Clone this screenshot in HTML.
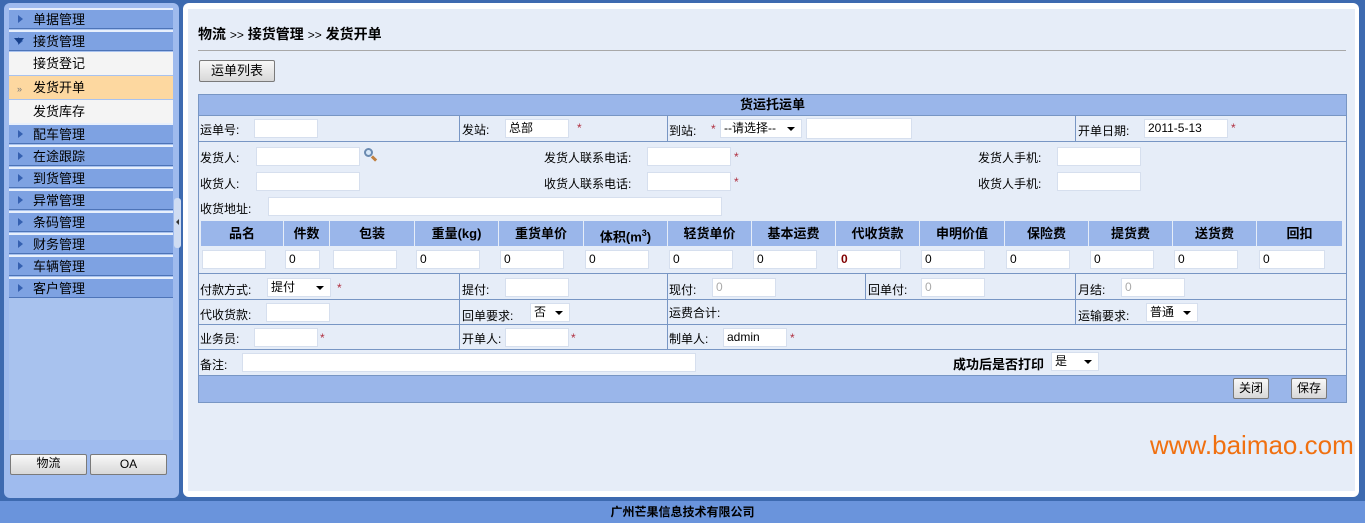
<!DOCTYPE html>
<html><head><meta charset="utf-8"><style>
*{margin:0;padding:0;box-sizing:border-box}
body{width:1365px;height:523px;position:relative;overflow:hidden;background:#3d6ab0;font-family:"Liberation Sans","Noto Sans CJK SC",sans-serif;font-size:12px;color:#000}
.a{position:absolute}
.t{position:absolute;font-size:12px;line-height:14px;white-space:nowrap}
.i{position:absolute;background:#fff;border:1px solid #d6dfee;height:19px;font-size:12px;line-height:17px;padding-left:3px}
.s{position:absolute;color:#b03040;font-size:12px}
.m{position:absolute;left:9px;width:164px;height:21px;background:#7ea2e2;border-top:2px solid #e8f0fc;border-bottom:1px solid #4d74b8;font-size:13px;line-height:19px;padding-left:24px}
.m:before{content:"";position:absolute;left:9px;top:5px;border-left:5px solid #3560b0;border-top:4px solid transparent;border-bottom:4px solid transparent}
.sub{position:absolute;left:9px;width:164px;height:23px;background:#f4f4f4;font-size:13px;line-height:23px;padding-left:24px}
.hl{position:absolute;top:221px;height:25px;background:#9ab6ea;font-weight:bold;font-size:13px;line-height:25px;text-align:center;border-right:1px solid #e6edf8}
.h{position:absolute;left:199px;width:1147px;border-top:1px solid #7896c4}
.btn{position:absolute;background:linear-gradient(#f8f8f8,#d8d8d8);border:1px solid #7a7a7a;border-radius:2px;font-size:12px;text-align:center}
.dd:after{content:"";position:absolute;right:6px;top:7px;border-top:4px solid #000;border-left:4px solid transparent;border-right:4px solid transparent}
</style></head><body>
<div class="a" style="left:4px;top:3px;width:175px;height:495px;background:#9fbbee;border-radius:6px"></div>
<div class="a" style="left:9px;top:8px;width:164px;height:432px;background:#a8c2ee"></div>
<div class="m" style="top:8px">单据管理</div>
<div class="m" style="top:30px">接货管理</div>
<div class="a" style="left:14px;top:38px;border-top:6px solid #17408a;border-left:5px solid transparent;border-right:5px solid transparent"></div>
<div class="sub" style="top:52px">接货登记</div>
<div class="sub" style="top:76px;background:#fdd8a0">发货开单</div>
<div class="t" style="left:17px;top:82px;font-size:9px;color:#777">&#187;</div>
<div class="sub" style="top:100px">发货库存</div>
<div class="m" style="top:123px">配车管理</div>
<div class="m" style="top:145px">在途跟踪</div>
<div class="m" style="top:167px">到货管理</div>
<div class="m" style="top:189px">异常管理</div>
<div class="m" style="top:211px">条码管理</div>
<div class="m" style="top:233px">财务管理</div>
<div class="m" style="top:255px">车辆管理</div>
<div class="m" style="top:277px">客户管理</div>
<div class="btn" style="left:10px;top:454px;width:77px;height:21px;line-height:17px">物流</div>
<div class="btn" style="left:90px;top:454px;width:77px;height:21px;line-height:19px">OA</div>
<div class="a" style="left:174px;top:198px;width:7px;height:50px;background:#cfdcf2;border-radius:3px"></div>
<div class="a" style="left:176px;top:219px;border-right:3px solid #333;border-top:3px solid transparent;border-bottom:3px solid transparent"></div>
<div class="a" style="left:183px;top:3px;width:1176px;height:494px;background:#fff;border-radius:6px"></div>
<div class="a" style="left:188px;top:9px;width:1167px;height:482px;background:#e6edf8"></div>
<div class="t" style="left:198px;top:26px;font-size:14px;line-height:16px;font-weight:bold">物流 <span style="font-weight:normal;font-size:12px">&gt;&gt;</span> 接货管理 <span style="font-weight:normal;font-size:12px">&gt;&gt;</span> 发货开单</div>
<div class="a" style="left:198px;top:50px;width:1148px;border-top:1px solid #a8a8a8"></div>
<div class="btn" style="left:199px;top:60px;width:76px;height:22px;line-height:19px;font-size:13px">运单列表</div>
<div class="a" style="left:198px;top:94px;width:1149px;height:309px;border:1px solid #7896c4;background:#e6edf8"></div>
<div class="a" style="left:199px;top:95px;width:1147px;height:20px;background:#9ab6ea;text-align:center;font-weight:bold;font-size:13px;line-height:20px">货运托运单</div>
<div class="h" style="top:115px"></div>
<div class="h" style="top:141px"></div>
<div class="h" style="top:273px"></div>
<div class="h" style="top:299px"></div>
<div class="h" style="top:324px"></div>
<div class="h" style="top:349px"></div>
<div class="h" style="top:375px"></div>
<div class="a" style="left:199px;top:376px;width:1147px;height:26px;background:#9ab6ea"></div>
<div class="a" style="left:459px;top:115px;height:26px;border-left:1px solid #7896c4"></div>
<div class="a" style="left:667px;top:115px;height:26px;border-left:1px solid #7896c4"></div>
<div class="a" style="left:1075px;top:115px;height:26px;border-left:1px solid #7896c4"></div>
<div class="a" style="left:459px;top:273px;height:76px;border-left:1px solid #7896c4"></div>
<div class="a" style="left:667px;top:273px;height:76px;border-left:1px solid #7896c4"></div>
<div class="a" style="left:865px;top:273px;height:26px;border-left:1px solid #7896c4"></div>
<div class="a" style="left:1075px;top:273px;height:51px;border-left:1px solid #7896c4"></div>
<div class="t" style="left:200px;top:123px">运单号:</div><div class="i" style="left:254px;top:119px;width:64px"></div>
<div class="t" style="left:462px;top:123px">发站:</div><div class="i" style="left:505px;top:119px;width:64px">总部</div><div class="s" style="left:577px;top:121px">*</div>
<div class="t" style="left:669px;top:124px">到站:</div><div class="s" style="left:711px;top:122px">*</div>
<div class="i dd" style="left:720px;top:119px;width:82px">--请选择--</div><div class="i" style="left:806px;top:118px;width:106px;height:21px"></div>
<div class="t" style="left:1078px;top:124px">开单日期:</div><div class="i" style="left:1144px;top:119px;width:84px">2011-5-13</div><div class="s" style="left:1231px;top:121px">*</div>
<div class="t" style="left:200px;top:151px">发货人:</div><div class="i" style="left:256px;top:147px;width:104px"></div>
<div class="a" style="left:364px;top:148px;width:9px;height:9px;border:2px solid #6a8ab0;border-radius:50%;background:#d8e8f8"></div><div class="a" style="left:371px;top:157px;width:6px;height:3px;background:#c08040;transform:rotate(45deg)"></div>
<div class="t" style="left:544px;top:151px">发货人联系电话:</div><div class="i" style="left:647px;top:147px;width:84px"></div><div class="s" style="left:734px;top:150px">*</div>
<div class="t" style="left:978px;top:151px">发货人手机:</div><div class="i" style="left:1057px;top:147px;width:84px"></div>
<div class="t" style="left:200px;top:177px">收货人:</div><div class="i" style="left:256px;top:172px;width:104px"></div>
<div class="t" style="left:544px;top:177px">收货人联系电话:</div><div class="i" style="left:647px;top:172px;width:84px"></div><div class="s" style="left:734px;top:175px">*</div>
<div class="t" style="left:978px;top:177px">收货人手机:</div><div class="i" style="left:1057px;top:172px;width:84px"></div>
<div class="t" style="left:200px;top:202px">收货地址:</div><div class="i" style="left:268px;top:197px;width:454px"></div>
<div class="hl" style="left:201px;width:83px">品名</div>
<div class="hl" style="left:284px;width:46px">件数</div>
<div class="hl" style="left:330px;width:85px">包装</div>
<div class="hl" style="left:415px;width:84px">重量(kg)</div>
<div class="hl" style="left:499px;width:85px">重货单价</div>
<div class="hl" style="left:584px;width:84px">体积(m<sup style="font-size:9px">3</sup>)</div>
<div class="hl" style="left:668px;width:84px">轻货单价</div>
<div class="hl" style="left:752px;width:84px">基本运费</div>
<div class="hl" style="left:836px;width:84px">代收货款</div>
<div class="hl" style="left:920px;width:85px">申明价值</div>
<div class="hl" style="left:1005px;width:84px">保险费</div>
<div class="hl" style="left:1089px;width:84px">提货费</div>
<div class="hl" style="left:1173px;width:84px">送货费</div>
<div class="hl" style="left:1257px;width:86px">回扣</div>
<div class="i" style="left:202px;top:250px;width:64px"></div>
<div class="i" style="left:285px;top:250px;width:35px">0</div>
<div class="i" style="left:333px;top:250px;width:64px"></div>
<div class="i" style="left:416px;top:250px;width:64px">0</div>
<div class="i" style="left:500px;top:250px;width:64px">0</div>
<div class="i" style="left:585px;top:250px;width:64px">0</div>
<div class="i" style="left:669px;top:250px;width:64px">0</div>
<div class="i" style="left:753px;top:250px;width:64px">0</div>
<div class="i" style="left:837px;top:250px;width:64px;color:#800000;font-weight:bold">0</div>
<div class="i" style="left:921px;top:250px;width:64px">0</div>
<div class="i" style="left:1006px;top:250px;width:64px">0</div>
<div class="i" style="left:1090px;top:250px;width:64px">0</div>
<div class="i" style="left:1174px;top:250px;width:64px">0</div>
<div class="i" style="left:1259px;top:250px;width:66px">0</div>
<div class="t" style="left:200px;top:283px">付款方式:</div><div class="i dd" style="left:267px;top:278px;width:64px">提付</div><div class="s" style="left:337px;top:281px">*</div>
<div class="t" style="left:462px;top:283px">提付:</div><div class="i" style="left:505px;top:278px;width:64px"></div>
<div class="t" style="left:669px;top:283px">现付:</div><div class="i" style="left:712px;top:278px;width:64px;color:#aaa">0</div>
<div class="t" style="left:868px;top:283px">回单付:</div><div class="i" style="left:921px;top:278px;width:64px;color:#aaa">0</div>
<div class="t" style="left:1078px;top:283px">月结:</div><div class="i" style="left:1121px;top:278px;width:64px;color:#aaa">0</div>
<div class="t" style="left:200px;top:308px">代收货款:</div><div class="i" style="left:266px;top:303px;width:64px"></div>
<div class="t" style="left:462px;top:309px">回单要求:</div><div class="i dd" style="left:530px;top:303px;width:40px">否</div>
<div class="t" style="left:669px;top:306px">运费合计:</div>
<div class="t" style="left:1078px;top:309px">运输要求:</div><div class="i dd" style="left:1146px;top:303px;width:52px">普通</div>
<div class="t" style="left:200px;top:332px">业务员:</div><div class="i" style="left:254px;top:328px;width:64px"></div><div class="s" style="left:320px;top:331px">*</div>
<div class="t" style="left:462px;top:332px">开单人:</div><div class="i" style="left:505px;top:328px;width:64px"></div><div class="s" style="left:571px;top:331px">*</div>
<div class="t" style="left:669px;top:332px">制单人:</div><div class="i" style="left:723px;top:328px;width:64px">admin</div><div class="s" style="left:790px;top:331px">*</div>
<div class="t" style="left:200px;top:358px">备注:</div><div class="i" style="left:242px;top:353px;width:454px"></div>
<div class="t" style="left:953px;top:358px;font-weight:bold;font-size:13px">成功后是否打印</div><div class="i dd" style="left:1051px;top:352px;width:48px">是</div>
<div class="btn" style="left:1233px;top:378px;width:36px;height:21px;line-height:19px">关闭</div>
<div class="btn" style="left:1291px;top:378px;width:36px;height:21px;line-height:19px">保存</div>
<div class="t" style="left:1150px;top:430px;font-size:26px;line-height:30px;color:#f07010">www.baimao.com</div>
<div class="a" style="left:0;top:501px;width:1365px;height:22px;background:#6a94dc;text-align:center;font-weight:bold;font-size:12px;line-height:22px">广州芒果信息技术有限公司</div>
</body></html>
